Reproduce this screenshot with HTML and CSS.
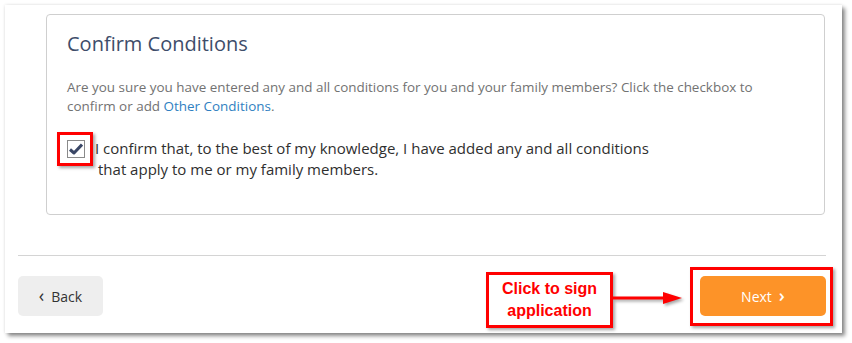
FILE: index.html
```html
<!DOCTYPE html>
<html>
<head>
<meta charset="utf-8">
<link rel="stylesheet" href="styles.css">
</head>
<body>
<div class="frame">
  <div class="card">
    <h2 class="title">Confirm Conditions</h2>
    <p class="intro">Are you sure you have entered any and all conditions for you and your family members? Click the checkbox to confirm or add <a class="link" href="#">Other Conditions</a>.</p>
    <label class="confirm">
      <span class="checkbox">
        <svg width="14" height="12" viewBox="0 0 14 12"><path d="M1 6.5 L5 10 L13 1.5" fill="none" stroke="#3a4766" stroke-width="3" stroke-linejoin="round"/></svg>
      </span>
      <span class="confirm-text">I confirm that, to the best of my knowledge, I have added any and all conditions<br><span class="indent">that apply to me or my family members.</span></span>
    </label>
  </div>
  <hr class="divider">
  <div class="actions">
    <button class="btn btn-back"><span class="chev">&lsaquo;</span> Back</button>
    <button class="btn btn-next">Next <span class="chev-r">&rsaquo;</span></button>
  </div>

  <div class="hl hl-check"></div>
  <div class="hl hl-next"></div>
  <div class="callout">Click to sign<br>application</div>
  <svg class="arrow" width="72" height="20" viewBox="0 0 72 20">
    <line x1="0" y1="9" x2="52" y2="9" stroke="#f00" stroke-width="3"/>
    <polygon points="50,3 69,9 50,15" fill="#f00"/>
  </svg>
</div>
</body>
</html>
```
FILE: styles.css
```css
* { box-sizing: border-box; }
html, body { margin: 0; padding: 0; background: #fff; }
body { font-family: "Open Sans", "DejaVu Sans", sans-serif; width: 852px; height: 343px; overflow: hidden; }

.frame {
  position: relative;
  margin: 5px 0 0 5px;
  width: 837px;
  height: 328px;
  background: #fff;
  padding: 9px 16px 0 13px;
  box-shadow: 0 0 3px rgba(0,0,0,0.12), 3px 3px 4px rgba(0,0,0,0.45);
}

.card {
  margin: 0 0 0 28px;
  width: 779px;
  height: 201px;
  border: 1px solid #cfcfcf;
  border-radius: 4px;
  padding: 16px 20px 0 20px;
}
.title {
  margin: 0;
  font-size: 20px;
  line-height: 26px;
  font-weight: 400;
  color: #3e4d6a;
}
.intro {
  margin: 21px 0 0 0;
  max-width: 705px;
  font-size: 13.45px;
  line-height: 19px;
  color: #727272;
}
.link { color: #2f7fc1; text-decoration: none; }

.confirm {
  display: flex;
  align-items: flex-start;
  margin-top: 22px;
}
.checkbox {
  flex: none;
  width: 18px;
  height: 18px;
  border: 1px solid #8a8a8a;
  background: #fff;
  display: flex;
  align-items: center;
  justify-content: center;
  margin-top: 2px;
}
.confirm-text {
  margin-left: 10px;
  font-size: 15px;
  line-height: 21px;
  color: #2f2f2f;
}
.indent { padding-left: 3px; }

.divider {
  margin: 40px 0 0 0;
  border: 0;
  border-top: 1px solid #d4d4d4;
  height: 0;
}
.actions {
  display: flex;
  justify-content: space-between;
  margin-top: 20px;
}
.btn {
  height: 40px;
  border: 0;
  border-radius: 5px;
  font-family: "Open Sans", "DejaVu Sans", sans-serif;
  font-size: 14px;
  display: flex;
  align-items: center;
  justify-content: center;
  padding: 0;
}
.btn-back { width: 85px; background: #eeeeee; color: #333; }
.btn-back .chev { font-size: 18px; margin-right: 7px; line-height: 1; position: relative; top: -1px; }
.btn-next { width: 126px; background: #fd9328; color: #fff; }
.btn-next .chev-r { font-size: 18px; margin-left: 7px; line-height: 1; position: relative; top: -1px; font-weight: 600; }

.hl {
  position: absolute;
  border: 3px solid #f00;
  box-shadow: 2px 2px 3px rgba(0,0,0,0.35);
}
.hl-check { left: 52px; top: 127px; width: 36px; height: 34px; }
.hl-next { left: 685px; top: 262px; width: 143px; height: 59px; }

.callout {
  position: absolute;
  left: 481px;
  top: 267px;
  width: 127px;
  height: 56px;
  border: 3px solid #f00;
  background: #fff;
  box-shadow: 2px 2px 3px rgba(0,0,0,0.35);
  color: #f00;
  font-family: "Liberation Sans", Arial, sans-serif;
  font-weight: 700;
  font-size: 16px;
  line-height: 22px;
  text-align: center;
  padding-top: 3px;
}
.arrow {
  position: absolute;
  left: 608px;
  top: 284px;
  filter: drop-shadow(2px 2px 1.5px rgba(0,0,0,0.35));
}
```
